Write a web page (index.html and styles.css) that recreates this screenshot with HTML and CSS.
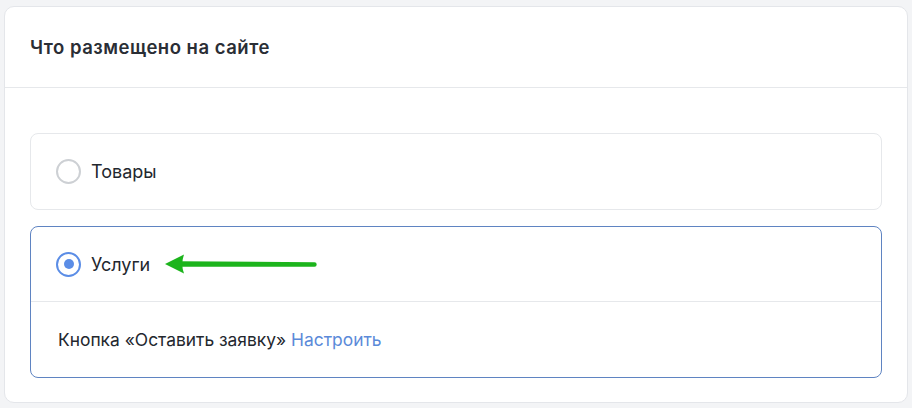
FILE: index.html
```html
<!DOCTYPE html>
<html lang="ru">
<head>
<meta charset="utf-8">
<link rel="stylesheet" href="styles.css">
</head>
<body>
<section class="panel">
  <header class="panel-head">
    <h2 class="title">Что размещено на сайте</h2>
  </header>
  <div class="panel-body">
    <label class="option">
      <div class="option-row">
        <span class="radio"></span>
        <span class="label">Товары</span>
      </div>
    </label>
    <div class="option option-active">
      <div class="option-row">
        <span class="radio radio-on"></span>
        <span class="label">Услуги</span>
        <svg class="arrow" width="154" height="22" viewBox="0 0 154 22">
          <path d="M1 11 L20 1.5 Q16.5 11 20 20.5 Z" fill="#1cb41c"/>
          <path d="M14 8.3 L150.5 9.3 A2.2 2.2 0 0 1 150.5 13.7 L14 13.7 Z" fill="#1cb41c"/>
        </svg>
      </div>
      <div class="option-foot">
        <span>Кнопка «Оставить заявку» <a class="link" href="#">Настроить</a></span>
      </div>
    </div>
  </div>
</section>
</body>
</html>
```
FILE: styles.css
```css
* { box-sizing: border-box; }
html, body { margin: 0; }
body {
  background: #f3f4f6;
  padding: 6px 4px 5px 4px;
  font-family: Inter, "Noto Sans", sans-serif;
  color: #23272e;
  height: 408px;
}
.panel {
  background: #fff;
  border: 1px solid #e4e6ea;
  border-radius: 10px;
  height: 397px;
  display: flex;
  flex-direction: column;
}
.panel-head {
  height: 81px;
  border-bottom: 1px solid #e6e8eb;
  display: flex;
  align-items: center;
  padding: 0 25px;
}
.title {
  margin: 0;
  font-size: 18.5px;
  font-weight: 600;
  color: #2a2e35;
  letter-spacing: 0.5px;
}
.panel-body {
  padding: 45px 25px 0 25px;
  display: flex;
  flex-direction: column;
  gap: 16px;
}
.option {
  display: block;
  border: 1px solid #e6e8eb;
  border-radius: 8px;
}
.option-active {
  border-color: #5f84c2;
}
.option-row {
  height: 75px;
  display: flex;
  align-items: center;
  padding: 0 25px;
}
.option-active .option-row {
  border-bottom: 1px solid #e6e8eb;
}
.radio {
  width: 25px;
  height: 25px;
  border-radius: 50%;
  border: 2.5px solid #cdd0d4;
  display: flex;
  align-items: center;
  justify-content: center;
  flex: none;
}
.radio-on {
  border-color: #5b8de6;
}
.radio-on::after {
  content: "";
  width: 10px;
  height: 10px;
  border-radius: 50%;
  background: #5b8de6;
}
.label {
  margin-left: 10px;
  font-size: 18px;
  color: #23272e;
}
.arrow {
  margin-left: 14px;
  display: block;
}
.option-foot {
  height: 75px;
  display: flex;
  align-items: center;
  padding: 0 27px;
  font-size: 17.4px;
  color: #23272e;
}
.link {
  color: #5b8ad9;
  text-decoration: none;
}
```
